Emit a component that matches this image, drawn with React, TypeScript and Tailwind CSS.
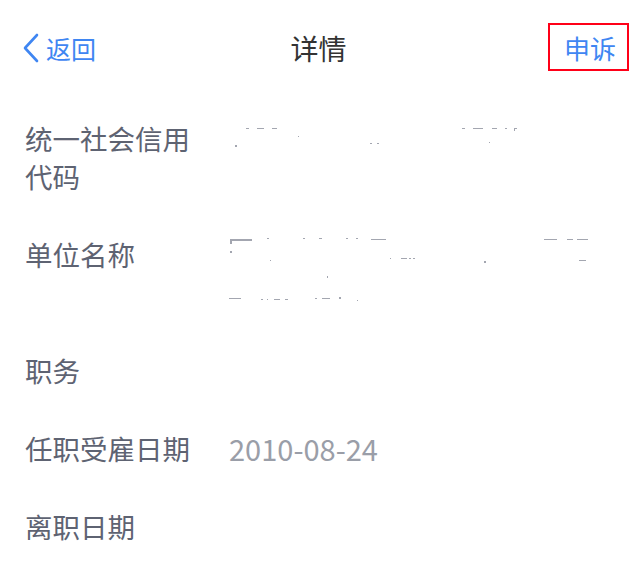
import React from "react";

const font = { fontFamily: '"Noto Sans CJK SC", "Noto Sans", sans-serif' };

type Speck = [number, number, number, number];

function Redacted({ w, h, specks }: { w: number; h: number; specks: Speck[] }) {
  return (
    <svg width={w} height={h} viewBox={`0 0 ${w} ${h}`} className="block">
      {specks.map(([x, y, sw, sh], i) => (
        <rect key={i} x={x} y={y} width={sw} height={sh} fill="#a3a6b0" />
      ))}
    </svg>
  );
}

const row1: Speck[] = [
  [17, 9, 3, 1],
  [28, 9, 7, 1],
  [43, 9, 5, 1],
  [69, 17, 1, 1],
  [6, 26, 2, 2],
  [141, 24, 2, 1],
  [148, 24, 2, 1],
  [233, 9, 3, 1],
  [244, 9, 10, 1],
  [263, 9, 5, 1],
  [276, 9, 2, 1],
  [285, 9, 3, 1],
  [285, 10, 1, 2],
  [260, 23, 1, 1],
];

const row2: Speck[] = [
  [1, 4, 22, 2],
  [1, 5, 2, 4],
  [38, 3, 2, 1],
  [74, 3, 2, 1],
  [90, 3, 3, 1],
  [117, 3, 2, 1],
  [127, 3, 2, 1],
  [142, 4, 15, 1],
  [315, 4, 13, 1],
  [338, 4, 6, 1],
  [348, 4, 11, 1],
  [1, 16, 2, 2],
  [41, 25, 1, 1],
  [161, 23, 1, 1],
  [172, 23, 6, 1],
  [180, 23, 2, 1],
  [184, 23, 2, 1],
  [255, 26, 2, 2],
  [350, 25, 7, 1],
  [98, 41, 1, 2],
  [0, 63, 12, 1],
  [32, 64, 2, 1],
  [38, 64, 1, 1],
  [45, 64, 6, 1],
  [56, 64, 3, 1],
  [86, 63, 2, 1],
  [93, 63, 8, 1],
  [110, 62, 2, 2],
  [128, 65, 1, 1],
];

function Row({
  label,
  children,
}: {
  label: string;
  children?: React.ReactNode;
}) {
  return (
    <div className="flex gap-[24px] pl-[25px] pr-[20px] pt-[21px] pb-[19px]">
      <div className="w-[180px] shrink-0 text-[27.5px] leading-[38px] text-[#5e6372]">
        {label}
      </div>
      <div className="flex-1 text-[29px] leading-[38px] text-[#9a9ea8]">
        {children}
      </div>
    </div>
  );
}

export default function App() {
  return (
    <div className="w-[637px] h-[570px] bg-white overflow-hidden" style={font}>
      <div className="relative flex h-[98px] items-center pb-[2px] px-[20px]">
        <div className="flex flex-1 items-center text-[25px] text-[#3f86f2]">
          <svg width="18" height="30" viewBox="0 0 18 30" className="mr-[6px] ml-[2px]">
            <polyline
              points="15,2 3,15 15,28"
              fill="none"
              stroke="#3f86f2"
              strokeWidth="2.6"
              strokeLinecap="round"
              strokeLinejoin="round"
            />
          </svg>
          <span className="leading-none">返回</span>
        </div>
        <div className="text-[28px] leading-none text-[#333333]">详情</div>
        <div className="flex flex-1 justify-end">
          <div className="relative">
            <span className="block text-[26px] leading-none text-[#3f86f2] pr-[1px]">申诉</span>
            <div className="pointer-events-none absolute -left-[16px] -right-[12px] -top-[12px] -bottom-[10px] border-2 border-[#ff0018]" />
          </div>
        </div>
      </div>

      <Row label="统一社会信用代码">
        <Redacted w={300} h={76} specks={row1} />
      </Row>
      <Row label="单位名称">
        <Redacted w={370} h={76} specks={row2} />
      </Row>
      <Row label="职务" />
      <Row label="任职受雇日期">2010-08-24</Row>
      <Row label="离职日期" />
    </div>
  );
}
